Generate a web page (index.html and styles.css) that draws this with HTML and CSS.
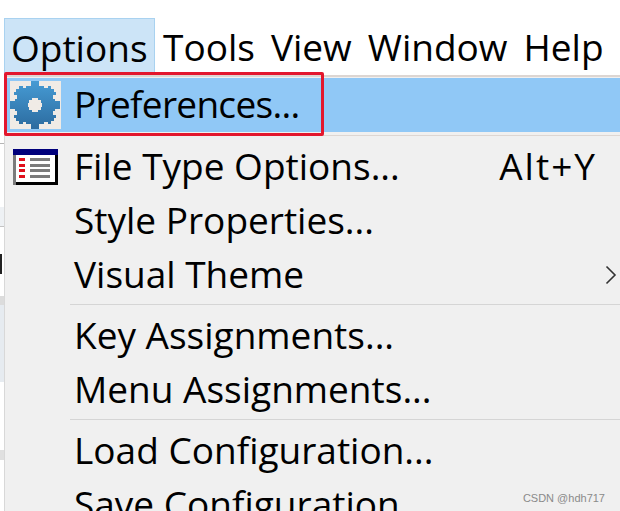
FILE: index.html
```html
<!DOCTYPE html>
<html lang="en">
<head>
<meta charset="UTF-8" />
<title>Options menu</title>
<link rel="stylesheet" href="styles.css">
</head>
<body>
<div class="menubar">
    <span class="top-item active">Options</span>
    <span class="top-item">Tools</span>
    <span class="top-item">View</span>
    <span class="top-item">Window</span>
    <span class="top-item">Help</span>
</div>
<div class="below">
    <div class="strip">
        <div class="band0"></div>
        <div class="band1"></div>
        <div class="band2"></div>
        <div class="band3"><span class="frag"></span></div>
        <div class="band4"></div>
        <div class="band5"></div>
        <div class="band6"></div>
        <div class="band7"></div>
    </div>
    <div class="menu">
        <div class="row selected">
            <span class="icon-cell">
                <span class="gear-box">
                    <svg width="50" height="48" viewBox="0 0 48 48" preserveAspectRatio="none">
                        <defs>
                            <linearGradient id="gearFill" x1="0" y1="0" x2="0" y2="1">
                                <stop offset="0" stop-color="#469bd4"/>
                                <stop offset="1" stop-color="#2c6b9f"/>
                            </linearGradient>
                        </defs>
                        <path fill="url(#gearFill)" fill-rule="evenodd" shape-rendering="crispEdges" d="M20 0H28V5H33V7H36V5H39V8H42V11H44V14H41V18H43V20H48V28H43V30H41V34H44V37H42V40H39V43H36V41H33V43H28V48H20V43H15V41H12V43H9V40H6V37H4V34H7V30H5V28H0V20H5V18H7V14H4V11H6V8H9V5H12V7H15V5H20ZM21 17V19H18V22H17V26H18V29H21V31H27V29H30V26H31V22H30V19H27V17Z"/>
                    </svg>
                </span>
            </span>
            <span class="label tight">Preferences...</span>
        </div>
        <div class="sep first-sep"></div>
        <div class="row">
            <span class="icon-cell">
                <svg class="list-icon" width="45" height="36" viewBox="0 0 45 36">
                    <rect width="45" height="36" fill="#000"/>
                    <rect width="45" height="6" fill="#00007b"/>
                    <rect x="0" y="6" width="3" height="30" fill="#7b7b7b"/>
                    <rect x="3" y="6" width="39" height="27" fill="#fff"/>
                    <rect x="6" y="9" width="6" height="3" fill="#e0101c"/>
                    <rect x="6" y="15" width="6" height="3" fill="#e0101c"/>
                    <rect x="6" y="20" width="6" height="3" fill="#e0101c"/>
                    <rect x="6" y="26" width="6" height="3" fill="#e0101c"/>
                    <rect x="17" y="9" width="20" height="3" fill="#7b7b7b"/>
                    <rect x="17" y="15" width="20" height="3" fill="#7b7b7b"/>
                    <rect x="17" y="20" width="20" height="3" fill="#7b7b7b"/>
                    <rect x="17" y="26" width="20" height="3" fill="#7b7b7b"/>
                </svg>
            </span>
            <span class="label">File Type Options...</span>
            <span class="shortcut">Alt+Y</span>
        </div>
        <div class="row">
            <span class="icon-cell"></span>
            <span class="label">Style Properties...</span>
        </div>
        <div class="row">
            <span class="icon-cell"></span>
            <span class="label">Visual Theme</span>
            <svg class="arrow" width="12" height="20" viewBox="0 0 12 20">
                <path d="M1.500 1.500L10 10l-8.500 8.500" fill="none" stroke="#333" stroke-width="1.600"/>
            </svg>
        </div>
        <div class="sep"></div>
        <div class="row">
            <span class="icon-cell"></span>
            <span class="label">Key Assignments...</span>
        </div>
        <div class="row">
            <span class="icon-cell"></span>
            <span class="label">Menu Assignments...</span>
        </div>
        <div class="sep"></div>
        <div class="row">
            <span class="icon-cell"></span>
            <span class="label">Load Configuration...</span>
        </div>
        <div class="row">
            <span class="icon-cell"></span>
            <span class="label">Save Configuration...</span>
        </div>
    </div>
</div>
<div class="redbox"></div>
<div class="watermark">CSDN @hdh717</div>
</body>
</html>
```

FILE: styles.css
```css
body {
    margin: 0;
    width: 620px;
    height: 511px;
    overflow: hidden;
    background: #fff;
    font-family: "Open Sans", "Noto Sans", sans-serif;
    font-size: 37px;
    color: #000;
    position: relative;
}
.menubar {
    display: flex;
    height: 57px;
    padding: 18px 0 0 4px;
}
.top-item {
    height: 54px;
    line-height: 57px;
    padding: 0 8px;
    white-space: nowrap;
}
.top-item.active {
    width: 137px;
    padding: 0 6px;
    background: #cce4f7;
    border: 1px solid #a9d2f0;
    border-bottom: 0;
}
.below {
    display: flex;
    height: 436px;
}
.strip {
    width: 5px;
    flex: none;
    background: #fff;
    border-right: 1px solid #d8d8d8;
    box-sizing: border-box;
}
.band0 { height: 68px; border-bottom: 1px solid #b5b5b5; }
.band1 { height: 63px; }
.band2 { height: 19px; background: #eef1f4; border-bottom: 1px solid #c4c4c4; }
.band3 { height: 69px; padding-top: 27px; box-sizing: border-box; }
.frag { display: block; width: 2px; height: 20px; background: #222; }
.band4 { height: 9px; background: #dcdcdc; }
.band5 { height: 77px; background: #e6ebf0; }
.band6 { height: 68px; }
.band7 { height: 10px; background: #e0e0e0; }
.menu {
    flex: 1;
    background: #f0f0f0;
    border-top: 2px solid #ddd6d2;
    padding-top: 1px;
}
.row {
    display: flex;
    align-items: center;
    height: 54px;
    white-space: nowrap;
}
.row.selected {
    background: #90c8f6;
}
.icon-cell {
    width: 69px;
    flex: none;
    display: flex;
    align-items: center;
}
.gear-box {
    display: flex;
    margin-left: 5px;
    width: 51px;
    height: 48px;
    background: #f0ebe6;
}
.list-icon {
    margin-left: 8px;
}
.label {
    flex: 1;
    padding-bottom: 4px;
}
.tight {
    letter-spacing: -0.7px;
}
.shortcut {
    padding-bottom: 4px;
    margin-right: 23px;
    letter-spacing: 2px;
}
.arrow {
    margin-right: 3px;
}
.sep {
    height: 1px;
    margin: 2px 0 4px 65px;
    background: #d5d5d5;
}
.first-sep {
    margin: 3px 0 4px 0;
    background: #ddd6d2;
}
/* annotation drawn on top of the screenshot */
.redbox {
    position: absolute;
    left: 4px;
    top: 72px;
    width: 314px;
    height: 58px;
    border: 3px solid #e3172d;
    border-radius: 2px;
}
.watermark {
    position: absolute;
    right: 15px;
    bottom: 7px;
    font-family: "Liberation Sans", sans-serif;
    font-size: 11px;
    color: #8a8a8a;
}
```
